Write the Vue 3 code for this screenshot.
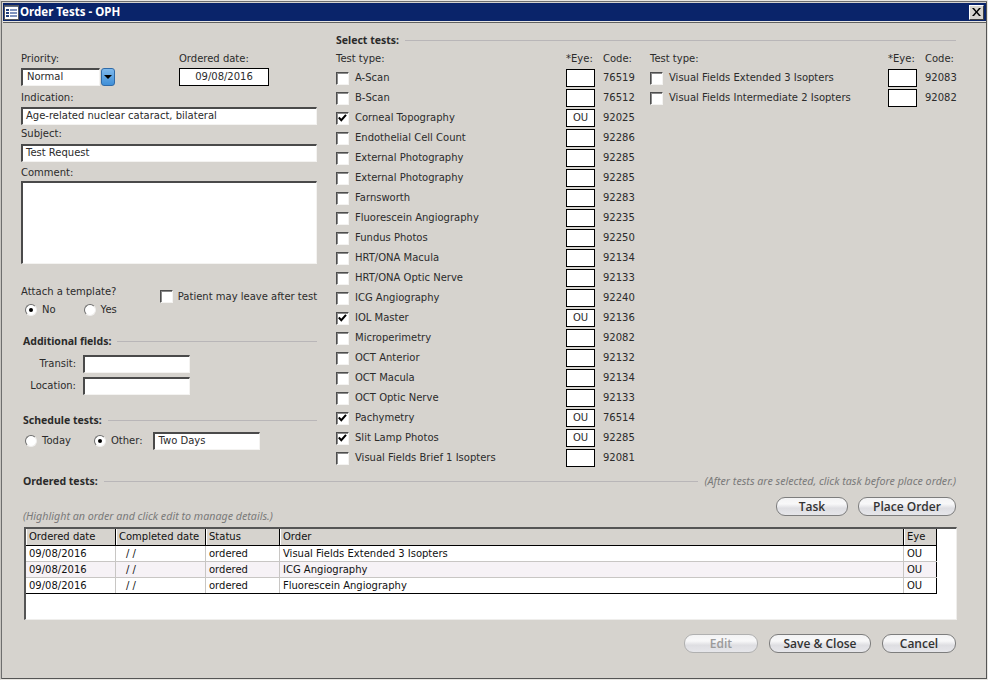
<script setup>
const col1 = [
  { name: 'A-Scan', code: '76519' },
  { name: 'B-Scan', code: '76512' },
  { name: 'Corneal Topography', code: '92025', eye: 'OU' },
  { name: 'Endothelial Cell Count', code: '92286' },
  { name: 'External Photography', code: '92285' },
  { name: 'External Photography', code: '92285' },
  { name: 'Farnsworth', code: '92283' },
  { name: 'Fluorescein Angiography', code: '92235' },
  { name: 'Fundus Photos', code: '92250' },
  { name: 'HRT/ONA Macula', code: '92134' },
  { name: 'HRT/ONA Optic Nerve', code: '92133' },
  { name: 'ICG Angiography', code: '92240' },
  { name: 'IOL Master', code: '92136', eye: 'OU' },
  { name: 'Microperimetry', code: '92082' },
  { name: 'OCT Anterior', code: '92132' },
  { name: 'OCT Macula', code: '92134' },
  { name: 'OCT Optic Nerve', code: '92133' },
  { name: 'Pachymetry', code: '76514', eye: 'OU' },
  { name: 'Slit Lamp Photos', code: '92285', eye: 'OU' },
  { name: 'Visual Fields Brief 1 Isopters', code: '92081' }
]
const col2 = [
  { name: 'Visual Fields Extended 3 Isopters', code: '92083' },
  { name: 'Visual Fields Intermediate 2 Isopters', code: '92082' }
]
const columns = [col1, col2]
const orders = [
  { order: 'Visual Fields Extended 3 Isopters' },
  { order: 'ICG Angiography' },
  { order: 'Fluorescein Angiography' }
]
</script>

<template>
  <div class="window">
    <div class="titlebar">
      <svg class="app-icon" width="15" height="15" viewBox="0 0 15 15">
        <rect x="0.5" y="0.5" width="14" height="14" fill="#5b6b8c" stroke="#55575c" />
        <rect x="1" y="2" width="13" height="12" fill="#fff" />
        <path d="M2 4h3v2H2zM2 7h3v2H2zM2 10h3v2H2z" fill="#22407f" />
        <path d="M6 4h7v2H6zM6 7h7v2H6zM6 10h7v2H6z" fill="#7f93bd" />
      </svg>
      <span class="title">Order Tests - OPH</span>
      <div class="close">
        <svg width="9" height="8" viewBox="0 0 9 8"><path d="M0 0h2l2.500 3L7 0h2L5.500 4 9 8H7L4.500 5 2 8H0l3.500-4z" fill="#000" /></svg>
      </div>
    </div>

    <div class="body">
      <div class="top">
        <div class="left">
          <div class="priority-row">
            <div class="priority">
              <div class="label">Priority:</div>
              <div class="combo">
                <div class="sunken combo-input">Normal</div>
                <div class="combo-btn"><span class="arrow"></span></div>
              </div>
            </div>
            <div class="ordered">
              <div class="label">Ordered date:</div>
              <div class="date-box">09/08/2016</div>
            </div>
          </div>
          <div class="label mt5">Indication:</div>
          <div class="sunken wide">Age-related nuclear cataract, bilateral</div>
          <div class="label mt2">Subject:</div>
          <div class="sunken wide subject">Test Request</div>
          <div class="label mt4">Comment:</div>
          <div class="sunken comment"></div>

          <div class="attach">
            <div>
              <div class="label">Attach a template?</div>
              <div class="radios">
                <span class="radio on"></span><span class="radio-text">No</span>
                <span class="radio yes"></span><span class="radio-text">Yes</span>
              </div>
            </div>
            <div class="leave">
              <span class="check"></span>
              <span>Patient may leave after test</span>
            </div>
          </div>

          <div class="section additional"><b>Additional fields:</b><i class="rule"></i></div>
          <div class="extra">
            <label>Transit:</label><div class="sunken extra-input"></div>
          </div>
          <div class="extra next">
            <label>Location:</label><div class="sunken extra-input"></div>
          </div>

          <div class="section schedule"><b>Schedule tests:</b><i class="rule"></i></div>
          <div class="schedule-row">
            <span class="radio"></span><span class="radio-text">Today</span>
            <span class="radio other on"></span><span class="radio-text">Other:</span>
            <div class="sunken days">Two Days</div>
          </div>
        </div>

        <div class="select">
          <div class="section select-head"><b>Select tests:</b><i class="rule"></i></div>
          <div class="test-cols">
            <div v-for="(col, c) in columns" :key="c" class="test-col">
              <div class="test-row test-head">
                <span class="name-head">Test type:</span>
                <span class="eye-head">*Eye:</span>
                <span class="code">Code:</span>
              </div>
              <div v-for="t in col" :key="t.name + t.code" class="test-row">
                <span class="check" :class="{ checked: t.eye }">
                  <svg v-if="t.eye" width="9" height="8" viewBox="0 0 9 8"><path d="M0.800 3.500l2.500 2.700L8 0.800" fill="none" stroke="#000" stroke-width="2" /></svg>
                </span>
                <span class="test-name">{{ t.name }}</span>
                <span class="eye">{{ t.eye }}</span>
                <span class="code">{{ t.code }}</span>
              </div>
            </div>
          </div>
        </div>
      </div>

      <div class="section ordered-head">
        <b>Ordered tests:</b><i class="rule"></i>
        <em class="note">(After tests are selected, click task before place order.)</em>
      </div>
      <div class="actions">
        <em class="note hint">(Highlight an order and click edit to manage details.)</em>
        <div class="action-btns">
          <button class="pill task">Task</button>
          <button class="pill place">Place Order</button>
        </div>
      </div>

      <div class="grid-box">
        <table>
          <thead>
            <tr>
              <th class="c1">Ordered date</th>
              <th class="c2">Completed date</th>
              <th class="c3">Status</th>
              <th>Order</th>
              <th class="c5">Eye</th>
            </tr>
          </thead>
          <tbody>
            <tr v-for="(o, i) in orders" :key="i" :class="{ alt: i === 1 }">
              <td>09/08/2016</td>
              <td class="blank-date">/ /</td>
              <td>ordered</td>
              <td>{{ o.order }}</td>
              <td>OU</td>
            </tr>
          </tbody>
        </table>
      </div>

      <div class="footer">
        <button class="pill edit" disabled>Edit</button>
        <button class="pill save">Save &amp; Close</button>
        <button class="pill cancel">Cancel</button>
      </div>
    </div>
  </div>
</template>

<style>
html, body { margin: 0; background: #d6d3ce; }
</style>

<style scoped>
.window {
  width: 988px;
  height: 680px;
  box-sizing: border-box;
  background: #d6d3ce;
  font-family: "DejaVu Sans", Verdana, sans-serif;
  font-size: 10px;
  line-height: 14px;
  color: #2b2b2b;
  overflow: hidden;
  border: 1px solid #e8e6e2;
  border-left-color: #c8c5c0;
  box-shadow: inset 1px 1px 0 #6e6e6e, inset -1px -1px 0 #555;
  padding: 2px;
}
.titlebar {
  height: 18px;
  background: #0a246a;
  display: flex;
  align-items: center;
  padding-left: 1px;
  margin-right: -1px;
  border-bottom: 1px solid #e8e6e2;
  box-shadow: 0 1px 0 #606060;
}
.app-icon { display: block; }
.title {
  color: #fff;
  font-family: "Noto Sans", sans-serif;
  font-weight: bold;
  font-size: 11.500px;
  margin-left: 1px;
}
.close {
  margin-left: auto;
  margin-right: 2px;
  width: 15px;
  height: 15px;
  background: #d6d3ce;
  border: 1px solid;
  border-color: #fff #404040 #404040 #fff;
  box-sizing: border-box;
  display: flex;
  align-items: center;
  justify-content: center;
}
.body {
  padding: 1px 28px 0 18px;
}
.top {
  display: flex;
  height: 444px;
}
.left {
  width: 296px;
  padding-top: 29px;
  margin-right: 19px;
  flex: none;
}
.label { height: 14px; white-space: nowrap; }
.mt5 { margin-top: 5px; }
.mt4 { margin-top: 4px; }
.mt2 { margin-top: 2px; }
.priority-row { display: flex; }
.priority { width: 158px; }
.label + .combo, .label + .date-box, .label + .sunken { margin-top: 2px; }
.label + .subject { margin-top: 3px; }
.label + .comment { margin-top: 1px; }
.combo { display: flex; align-items: center; gap: 1px; }
.sunken {
  box-sizing: border-box;
  background: #fff;
  border: 2px solid;
  border-color: #4a4a4a #f4f3f1 #f4f3f1 #4a4a4a;
  border-right-width: 1px;
  border-bottom-width: 1px;
  padding-left: 3px;
  height: 18px;
  line-height: 13px;
  white-space: nowrap;
}
.combo-input { width: 79px; padding-left: 4px; }
.combo-btn {
  width: 14px;
  height: 18px;
  box-sizing: border-box;
  border-radius: 3px;
  border: 1px solid #2f6aa8;
  background: linear-gradient(#7fb9ec, #3f8fd8);
  display: flex;
  align-items: center;
  justify-content: center;
}
.arrow {
  width: 0;
  height: 0;
  border: 4px solid transparent;
  border-top: 4px solid #000;
  border-bottom: 0;
}
.date-box {
  width: 90px;
  height: 18px;
  box-sizing: border-box;
  border: 1px solid #000;
  background: #fff;
  text-align: center;
  line-height: 16px;
}
.wide { width: 296px; }
.comment { width: 296px; height: 83px; }
.attach { display: flex; margin-top: 21px; }
.radios {
  display: flex;
  align-items: center;
  margin: 4px 0 0 4px;
  height: 13px;
}
.radio {
  box-sizing: border-box;
  width: 12px;
  height: 12px;
  border-radius: 50%;
  background: #fff;
  border: 1px solid #6d6d6d;
  border-right-color: #efeeec;
  border-bottom-color: #efeeec;
  position: relative;
  flex: none;
}
.radio.on::after {
  content: "";
  position: absolute;
  left: 3px;
  top: 3px;
  width: 4px;
  height: 4px;
  border-radius: 50%;
  background: #000;
}
.radio-text { margin-left: 5px; }
.radio.yes { margin-left: 28px; }
.leave {
  display: flex;
  align-items: center;
  gap: 5px;
  margin-left: 43px;
  margin-top: 5px;
  height: 13px;
  white-space: nowrap;
}
.check {
  box-sizing: border-box;
  width: 13px;
  height: 13px;
  flex: none;
  background: #fff;
  border: 1px solid;
  border-color: #4d4d4d #f4f3f1 #f4f3f1 #4d4d4d;
  box-shadow: inset 1px 1px 0 #8a8a8a;
  display: flex;
  align-items: center;
  justify-content: center;
}
.section {
  display: flex;
  align-items: center;
  height: 14px;
  white-space: nowrap;
}
.section b {
  font-family: "Noto Sans", sans-serif;
  font-size: 10.500px;
  font-weight: bold;
  color: #2a2a2a;
}
.rule {
  flex: 1;
  height: 1px;
  background: #b9b6b8;
  margin-left: 6px;
}
.additional { margin: 18px 0 0 2px; }
.extra {
  display: flex;
  align-items: center;
  justify-content: flex-start;
  margin-top: 7px;
}
.extra.next { margin-top: 4px; }
.extra label { width: 55px; text-align: right; margin-right: 7px; }
.extra-input { width: 107px; }
.schedule { margin: 18px 0 0 2px; }
.schedule-row {
  display: flex;
  align-items: center;
  margin: 5px 0 0 4px;
}
.radio.other { margin-left: 23px; }
.days { width: 107px; margin-left: 10px; padding-left: 4px; }
.select { flex: 1; padding-top: 10px; }
.select-head { margin-right: 1px; }
.test-cols {
  display: flex;
  gap: 17px;
  margin-top: 5px;
}
.test-col { width: 297px; }
.test-col + .test-col { width: 305px; }
.test-row {
  display: flex;
  align-items: center;
  height: 20px;
  white-space: nowrap;
}
.test-head { height: 16px; align-items: flex-start; }
.name-head { flex: 1; }
.eye-head { width: 37px; }
.test-name { margin-left: 6px; flex: 1; }
.eye {
  box-sizing: border-box;
  width: 29px;
  height: 18px;
  margin-right: 8px;
  border: 1px solid #000;
  background: #fff;
  text-align: center;
  line-height: 16px;
}
.code { width: 30px; flex: none; }
.ordered-head { margin: 7px 0 0 2px; }
.note {
  font-family: "Noto Sans", sans-serif;
  font-style: italic;
  font-size: 10.700px;
  color: #7a7a7a;
  margin-left: 6px;
  margin-right: 1px;
}
.actions {
  display: flex;
  justify-content: space-between;
  height: 25px;
  margin-top: 9px;
  margin-right: 1px;
}
.hint { align-self: flex-end; margin-left: 2px; margin-bottom: -1px; }
.action-btns { display: flex; gap: 10px; }
.pill {
  box-sizing: border-box;
  height: 19px;
  border-radius: 9px;
  border: 1px solid #7d7d7d;
  background: linear-gradient(#f3f3f4 0, #f8f8f9 35%, #dedee2 60%, #e6e6ea 100%);
  font-family: "Open Sans", sans-serif;
  font-size: 12px;
  font-weight: 600;
  color: #333;
  padding: 0;
}
.task { width: 72px; }
.place { width: 98px; }
.grid-box {
  box-sizing: border-box;
  margin: 5px 0 0 3px;
  width: 933px;
  height: 93px;
  background: #fff;
  border: 2px solid;
  border-color: #555 #efeeec #efeeec #555;
  border-right-width: 1px;
  border-bottom-width: 1px;
}
table {
  border-collapse: collapse;
  table-layout: fixed;
  width: 911px;
  font-size: 10px;
}
th {
  background: #d6d3ce;
  font-weight: normal;
  text-align: left;
  height: 16px;
  line-height: 14px;
  padding: 0 3px;
  border-right: 1px solid #000;
  border-bottom: 1px solid #000;
  box-shadow: inset 1px 0 0 #fff;
  color: #111;
}
td {
  height: 15px;
  line-height: 14px;
  padding: 0 3px;
  border-right: 1px solid #c8c6c4;
  border-bottom: 1px solid #c8c6c4;
  color: #111;
}
td:last-child { border-right: 1px solid #000; }
th:last-child { border-right: 1px solid #000; }
tbody tr:last-child td { border-bottom: 1px solid #000; }
.alt td { background: #f6f2f6; }
.c1 { width: 83px; }
.c2 { width: 83px; }
.c3 { width: 67px; }
.c5 { width: 26px; }
.blank-date { padding-left: 10px; }
.footer {
  display: flex;
  justify-content: flex-end;
  gap: 11px;
  margin: 14px 0 0;
  width: 935px;
}
.edit { width: 74px; color: #9a9a9a; border-color: #b0b0b0; }
.save { width: 102px; }
.cancel { width: 74px; }
</style>
